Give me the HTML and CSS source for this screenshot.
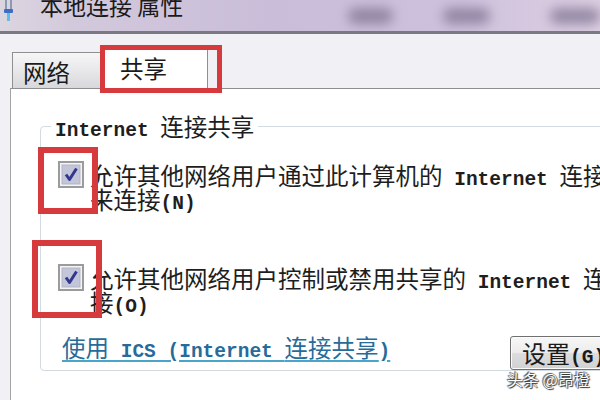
FILE: index.html
```html
<!DOCTYPE html>
<html lang="zh-CN">
<head>
<meta charset="utf-8">
<title>本地连接 属性</title>
<link rel="stylesheet" href="styles.css">
</head>
<body>
<div class="window">
  <div class="titlebar">
    <svg class="ticon" width="12" height="22" viewBox="0 0 12 22">
      <rect x="2" y="0" width="2" height="10" fill="#8d9ab4"/>
      <rect x="7" y="0" width="2" height="10" fill="#8d9ab4"/>
      <rect x="1" y="9" width="9" height="4" rx="1" fill="#3a6fc4"/>
      <rect x="4" y="13" width="3" height="8" fill="#56c2ea"/>
    </svg>
    <div class="title">本地连接 属性</div>
    <div class="blob b1"></div>
    <div class="blob b2"></div>
    <div class="blob b3"></div>
  </div>
  <div class="tabstrip">
    <div class="tab">网络</div>
    <div class="tab active">共享</div>
  </div>
  <div class="panel">
    <fieldset class="group">
      <legend class="legend"><span class="en">Internet </span>连接共享</legend>
      <div class="opt opt1">
        <svg class="cb" width="26" height="27" viewBox="0 0 26 27">
          <rect x="1" y="1" width="24" height="25" fill="#f4f4f6" stroke="#9b9b9b" stroke-width="2"/>
          <rect x="4" y="4" width="18" height="19" fill="#c3c6d8" stroke="#b1b4c6"/>
          <path d="M8 13.5 L11.5 18.5 L18.5 7.5" stroke="#34378f" stroke-width="3" fill="none" stroke-linejoin="round"/>
        </svg>
        <div class="opttext">允许其他网络用户通过此计算机的<span class="en"> Internet </span>连接来连接<span class="en">(N)</span></div>
      </div>
      <div class="opt opt2">
        <svg class="cb" width="26" height="27" viewBox="0 0 26 27">
          <rect x="1" y="1" width="24" height="25" fill="#f4f4f6" stroke="#9b9b9b" stroke-width="2"/>
          <rect x="4" y="4" width="18" height="19" fill="#c3c6d8" stroke="#b1b4c6"/>
          <path d="M8 13.5 L11.5 18.5 L18.5 7.5" stroke="#34378f" stroke-width="3" fill="none" stroke-linejoin="round"/>
        </svg>
        <div class="opttext">允许其他网络用户控制或禁用共享的<span class="en"> Internet </span>连接<span class="en">(O)</span></div>
      </div>
      <div class="linkrow">
        <a class="link">使用<span class="en"> ICS (Internet </span>连接共享<span class="en">)</span></a>
        <div class="btn">设置<span class="en">(G)</span></div>
      </div>
    </fieldset>
  </div>
  <div class="mark mark-tab"></div>
  <div class="mark mark-cb1"></div>
  <div class="mark mark-cb2"></div>
  <div class="watermark">头条 @昂橙</div>
</div>
</body>
</html>
```

FILE: styles.css
```css
html, body {
  margin: 0;
  padding: 0;
}
body {
  width: 600px;
  height: 400px;
  overflow: hidden;
  background: #f1f0f4;
  font-family: "Noto Sans CJK SC", sans-serif;
  color: #1e1e1e;
}
.window {
  position: relative;
  display: flex;
  flex-direction: column;
  height: 400px;
}
.titlebar {
  height: 31px;
  flex: none;
  display: flex;
  align-items: flex-start;
  overflow: hidden;
  background: linear-gradient(90deg, #dcd6e0 0%, #d3c9dc 12%, #c9bdd9 45%, #cdc0dc 75%, #dccfe2 100%);
  border-bottom: 3px solid #7b7883;
}
.ticon {
  flex: none;
  margin-left: 3px;
}
.title {
  flex: none;
  margin: -6px 0 0 25px;
  font-size: 23px;
  line-height: 23px;
  color: #1a1a1a;
  white-space: nowrap;
}
.blob {
  flex: none;
  height: 16px;
  margin-top: 8px;
  border-radius: 8px;
  background: #7d7290;
  filter: blur(6px);
  opacity: 0.75;
}
.b1 { width: 45px; margin-left: 165px; }
.b2 { width: 47px; margin-left: 50px; }
.b3 { width: 50px; margin-left: 60px; }

.tabstrip {
  height: 54px;
  flex: none;
  display: flex;
  align-items: flex-end;
  padding-left: 12px;
}
.tab {
  box-sizing: border-box;
  height: 36px;
  width: 89px;
  padding: 7px 0 0 10px;
  border: 1px solid #8f8f8f;
  border-bottom: none;
  background: linear-gradient(180deg, #f6f6f7 0%, #e8e8ea 50%, #d8d8dc 100%);
  font-size: 23.5px;
  line-height: 24px;
  color: #1a1a1a;
}
.tab.active {
  position: relative;
  z-index: 1;
  height: 42px;
  width: 108px;
  margin-left: -1px;
  margin-bottom: -1px;
  padding: 8px 0 0 19px;
  background: #fff;
}
.panel {
  flex: 1;
  margin-left: 10px;
  background: #fff;
  border-top: 1px solid #8e8e8e;
  border-left: 1px solid #a3a3a3;
  overflow: hidden;
}
.group {
  margin: 25px 0 0 29px;
  padding: 0;
  width: 600px;
  min-width: 0;
  border: 1px solid #d3dbe2;
  border-radius: 4px;
}
.legend {
  margin-left: 10px;
  padding: 0 4px;
  font-size: 23.5px;
  line-height: 24px;
  color: #1e1e1e;
}
.en {
  font-family: "Liberation Mono", monospace;
  font-size: 19.5px;
  font-weight: bold;
  line-height: 0;
}
.opt {
  display: flex;
  align-items: flex-start;
  gap: 6px;
  padding-left: 17px;
}
.opt1 { margin-top: 25px; }
.opt2 { margin-top: 55px; }
.cb {
  flex: none;
  margin-top: -2px;
}
.opttext {
  width: 525px;
  font-size: 23.5px;
  line-height: 24px;
  color: #1e1e1e;
}
.linkrow {
  display: grid;
  grid-template-columns: 448px auto;
  align-items: start;
  margin-top: 21px;
  padding-left: 21px;
}
.link {
  font-size: 23.5px;
  line-height: 24px;
  color: #286b98;
  text-decoration: underline;
  text-decoration-color: #4aa3c8;
  text-underline-offset: 3px;
  white-space: nowrap;
}
.btn {
  box-sizing: border-box;
  margin-top: 1px;
  height: 34px;
  width: 120px;
  padding-left: 11px;
  border: 1px solid #707070;
  border-radius: 3px;
  background: linear-gradient(180deg, #f7f7f7 0%, #ececec 48%, #dcdcdc 52%, #d2d2d2 100%);
  box-shadow: inset 0 0 0 1px #fbfbfb;
  font-size: 24px;
  line-height: 31px;
  color: #1a1a1a;
  white-space: nowrap;
}
.mark {
  position: absolute;
  box-sizing: border-box;
  border-style: solid;
  border-color: #d63a3c;
  z-index: 5;
}
.mark-tab {
  left: 100px;
  top: 45px;
  width: 122px;
  height: 48px;
  border-width: 5px;
}
.mark-cb1 {
  left: 38px;
  top: 147px;
  width: 60px;
  height: 67px;
  border-width: 6px;
}
.mark-cb2 {
  left: 32px;
  top: 240px;
  width: 70px;
  height: 78px;
  border-width: 6px;
}
.watermark {
  position: absolute;
  left: 507px;
  top: 369px;
  z-index: 6;
  font-size: 16px;
  line-height: 20px;
  color: #fff;
  white-space: nowrap;
  text-shadow: 0 0 1px #222, 1px 1px 1px #333, -1px -1px 1px #555;
}
```
